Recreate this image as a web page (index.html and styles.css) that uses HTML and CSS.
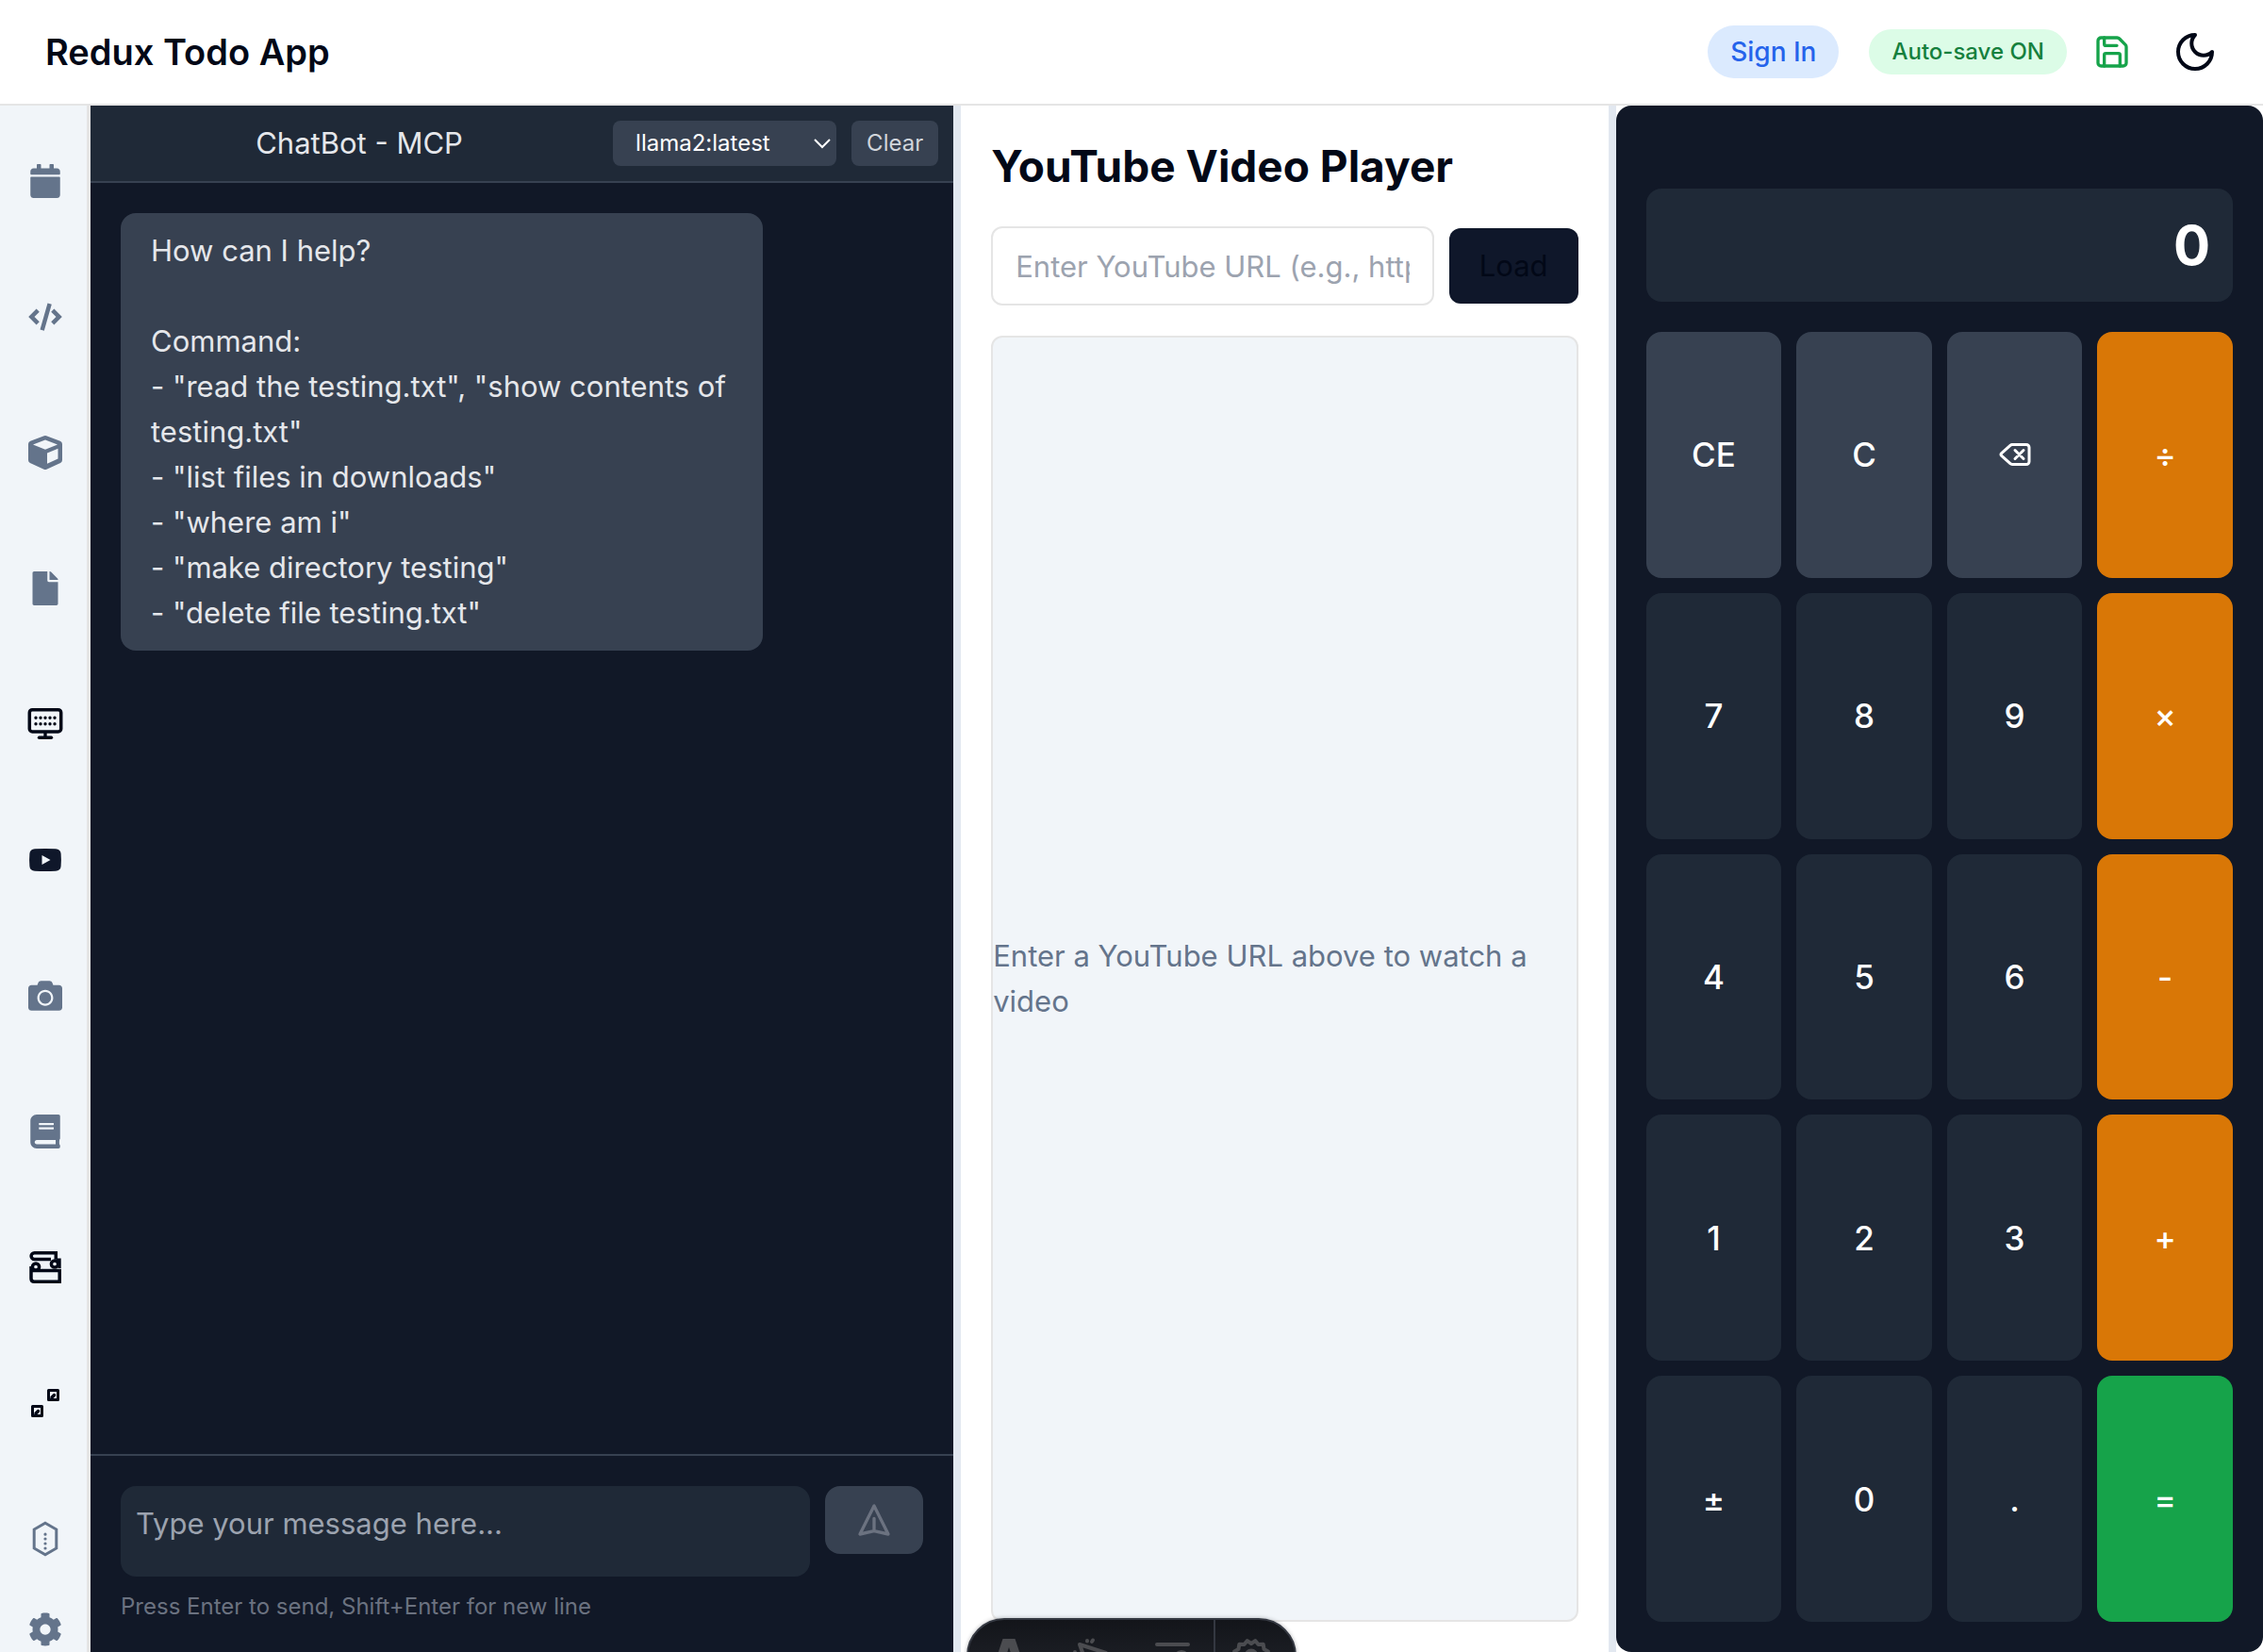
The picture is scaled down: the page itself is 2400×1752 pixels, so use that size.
FILE: index.html
```html
<!DOCTYPE html>
<html lang="en">
<head>
<meta charset="utf-8">
<title>Redux Todo App</title>
<link rel="stylesheet" href="styles.css">
</head>
<body>
<header class="topbar">
  <h1 class="brand">Redux Todo App</h1>
  <div class="topbar-actions">
    <button class="sign-in" type="button">Sign In</button>
    <div class="save-group">
      <button class="autosave" type="button">Auto-save ON</button>
      <button class="icon-btn save-btn" type="button" aria-label="Save">
        <svg width="40" height="40" viewBox="0 0 24 24" class="line"><path d="M15.2 3a2 2 0 0 1 1.4.6l3.8 3.8a2 2 0 0 1 .6 1.4V19a2 2 0 0 1-2 2H5a2 2 0 0 1-2-2V5a2 2 0 0 1 2-2z"/><path d="M17 21v-7a1 1 0 0 0-1-1H8a1 1 0 0 0-1 1v7M7 3v4a1 1 0 0 0 1 1h7"/></svg>
      </button>
    </div>
    <button class="icon-btn theme-btn" type="button" aria-label="Toggle theme">
      <svg width="48" height="48" viewBox="0 0 24 24" class="line"><path d="M12 3a6 6 0 0 0 9 9 9 9 0 1 1-9-9Z"/></svg>
    </button>
  </div>
</header>

<div class="workspace">
  <nav class="sidebar" aria-label="Tools">
    <div class="tools">
      <button class="tool" type="button" aria-label="Calendar"><svg width="32" height="36" viewBox="0 0 448 512"><path d="M12 192h424c6.600 0 12 5.400 12 12v260c0 26.500-21.500 48-48 48H48c-26.500 0-48-21.500-48-48V204c0-6.600 5.400-12 12-12zm436-44v-36c0-26.500-21.500-48-48-48h-48V12c0-6.600-5.400-12-12-12h-40c-6.600 0-12 5.400-12 12v52H160V12c0-6.600-5.400-12-12-12h-40c-6.600 0-12 5.400-12 12v52H48C21.500 64 0 85.500 0 112v36c0 6.600 5.400 12 12 12h424c6.600 0 12-5.400 12-12z"/></svg></button>
      <button class="tool" type="button" aria-label="Code"><svg width="40" height="40" viewBox="0 0 40 40"><path d="M22.500 5.500l4.300 1.200-8 28-4.300-1.200zM10.600 11.500l3.200 3.300-5.300 5.200 5.300 5.200-3.200 3.300L2.200 20zM29.400 11.500l-3.200 3.300 5.300 5.200-5.300 5.200 3.200 3.300L37.800 20z"/></svg></button>
      <button class="tool" type="button" aria-label="3D box"><svg width="40" height="40" viewBox="0 0 40 40"><path fill-rule="evenodd" d="M18.800 2.300q1.200-.5 2.400 0l14.600 5.500q2.200.9 2.200 3.200v17q0 2-1.900 3l-14.700 6.700q-1.400.6-2.800 0L3.900 31Q2 30 2 28V11q0-2.300 2.200-3.200zM20 6.500L7 11.600l13 5.200 13-5.200zM22 20.400v11.400l11.500-5.200V15.800z"/></svg></button>
      <button class="tool" type="button" aria-label="Files"><svg width="28" height="36" viewBox="0 0 384 512"><path d="M224 136V0H24C10.700 0 0 10.700 0 24v464c0 13.300 10.700 24 24 24h336c13.300 0 24-10.700 24-24V160H248c-13.200 0-24-10.800-24-24zm160-14.100v6.100H256V0h6.100c6.400 0 12.500 2.500 17 7l97.900 98c4.500 4.500 7 10.600 7 16.900z"/></svg></button>
      <button class="tool tool-dark" type="button" aria-label="ChatBot"><svg width="40" height="40" viewBox="0 0 40 40"><rect x="3.300" y="4.700" width="33.400" height="23.200" rx="3" fill="none" stroke="currentColor" stroke-width="3.500"/><path d="M18.300 28h3.400v5h-3.400z"/><path d="M13.500 34.300h13" stroke="currentColor" stroke-width="3.400" stroke-linecap="round"/><path d="M10 13.200h.01M15 13.200h.01M20 13.200h.01M25 13.200h.01M30 13.200h.01M10 19.800h.01M15 19.800h.01M20 19.800h.01M25 19.800h.01M30 19.800h.01" stroke="currentColor" stroke-width="3.400" stroke-linecap="round"/></svg></button>
      <button class="tool tool-active" type="button" aria-label="YouTube"><svg width="40" height="40" viewBox="0 0 40 40"><path fill-rule="evenodd" d="M9 8.300Q20 7.500 31 8.300q5.200.3 5.600 5 .6 6.700 0 13.400-.4 4.700-5.600 5-11 .8-22 0-5.200-.3-5.600-5-.6-6.700 0-13.400.4-4.700 5.600-5zM16.500 15v10l9-5z"/></svg></button>
      <button class="tool" type="button" aria-label="Camera"><svg width="36" height="36" viewBox="0 0 512 512"><path d="M512 144v288c0 26.500-21.500 48-48 48H48c-26.500 0-48-21.500-48-48V144c0-26.500 21.500-48 48-48h88l12.300-32.900c7-18.700 24.900-31.100 44.900-31.100h125.500c20 0 37.900 12.400 44.900 31.100L376 96h88c26.500 0 48 21.500 48 48zM376 288c0-66.200-53.800-120-120-120s-120 53.800-120 120 53.800 120 120 120 120-53.800 120-120zm-32 0c0 48.500-39.500 88-88 88s-88-39.500-88-88 39.500-88 88-88 88 39.500 88 88z"/></svg></button>
      <button class="tool" type="button" aria-label="Notebook"><svg width="32" height="36" viewBox="0 0 448 512"><path d="M448 360V24c0-13.300-10.700-24-24-24H96C43 0 0 43 0 96v320c0 53 43 96 96 96h328c13.300 0 24-10.700 24-24v-16c0-7.500-3.500-14.300-8.900-18.700-4.200-15.400-4.200-59.300 0-74.700 5.400-4.300 8.900-11.100 8.900-18.600zM128 134c0-3.300 2.700-6 6-6h212c3.300 0 6 2.700 6 6v20c0 3.300-2.700 6-6 6H134c-3.300 0-6-2.700-6-6v-20zm0 64c0-3.300 2.700-6 6-6h212c3.300 0 6 2.700 6 6v20c0 3.300-2.700 6-6 6H134c-3.300 0-6-2.700-6-6v-20zm253.400 250H96c-17.700 0-32-14.300-32-32 0-17.600 14.400-32 32-32h285.400c-1.900 17.100-1.900 46.900 0 64z"/></svg></button>
      <button class="tool tool-dark" type="button" aria-label="Wallet"><svg width="40" height="40" viewBox="0 0 40 40" fill="none" stroke="currentColor" stroke-width="3.500"><path d="M26 11.500H8.500a3.400 3.400 0 0 1 0-6.800h22.800v7"/><path d="M32 10.500h4.700v10.500h-3z" fill="currentColor" stroke="none"/><circle cx="30" cy="16.500" r="3.600"/><circle cx="10" cy="19.500" r="3.600"/><path d="M5 19v13q0 3.200 3.200 3.200h27v-11.600H8q-3 0-3-4"/></svg></button>
      <button class="tool tool-dark" type="button" aria-label="Transfer"><svg width="40" height="40" viewBox="0 0 40 40"><path fill-rule="evenodd" d="M23.500 5h10Q35 5 35 6.500v10q0 1.500-1.500 1.500h-10q-1.500 0-1.500-1.500v-10Q22 5 23.500 5zM25 8v7h7V8zM6.500 22h10q1.500 0 1.500 1.500v10q0 1.500-1.500 1.500h-10Q5 35 5 33.500v-10Q5 22 6.500 22zM8 25v7h7v-7z"/><path d="M27 14l2.500-2.500M10 31l2.500-2.500" stroke="currentColor" stroke-width="3.500" stroke-linecap="round"/></svg></button>
      <button class="tool" type="button" aria-label="Blocks"><svg width="40" height="40" viewBox="0 0 40 40"><path d="M20 3.200l11.800 6.800v20L20 36.800 8.200 30V10z" fill="none" stroke="currentColor" stroke-width="3"/><path d="M20 15.200h.01M20 20h.01M20 25h.01M20 30h.01" stroke="currentColor" stroke-width="3.200" stroke-linecap="round"/></svg></button>
    </div>
    <button class="tool" type="button" aria-label="Settings"><svg width="36" height="36" viewBox="0 0 512 512"><path d="M487.400 315.700l-42.600-24.600c4.300-23.200 4.300-47 0-70.200l42.600-24.600c4.900-2.800 7.100-8.600 5.500-14-11.100-35.600-30-67.800-54.700-94.600-3.800-4.100-10-5.100-14.800-2.300L380.800 110c-17.900-15.400-38.500-27.300-60.800-35.100V25.800c0-5.600-3.900-10.500-9.400-11.700-36.700-8.200-74.300-7.800-109.200 0-5.500 1.200-9.400 6.100-9.400 11.700V75c-22.200 7.900-42.800 19.800-60.800 35.100L88.700 85.500c-4.900-2.800-11-1.900-14.800 2.300-24.700 26.700-43.600 58.900-54.700 94.600-1.700 5.400.6 11.200 5.500 14L67.300 221c-4.300 23.200-4.300 47 0 70.200l-42.600 24.600c-4.900 2.800-7.100 8.600-5.500 14 11.100 35.600 30 67.800 54.700 94.600 3.800 4.100 10 5.100 14.800 2.300l42.600-24.600c17.900 15.400 38.500 27.300 60.800 35.100v49.200c0 5.600 3.900 10.500 9.400 11.700 36.700 8.200 74.300 7.800 109.200 0 5.500-1.200 9.400-6.100 9.400-11.700v-49.200c22.200-7.900 42.800-19.800 60.800-35.100l42.600 24.600c4.900 2.800 11 1.900 14.800-2.300 24.700-26.700 43.600-58.900 54.700-94.600 1.500-5.500-.7-11.300-5.600-14.100zM256 336c-44.100 0-80-35.900-80-80s35.900-80 80-80 80 35.900 80 80-35.900 80-80 80z"/></svg></button>
  </nav>

  <main class="panels">
    <section class="chat">
      <div class="chat-head">
        <h2 class="chat-title">ChatBot - MCP</h2>
        <div class="select-wrap">
          <select class="model" aria-label="Model"><option>llama2:latest</option></select>
          <svg class="chevron" width="20" height="12" viewBox="0 0 20 12"><path d="M2 2l8 8 8-8" fill="none" stroke="currentColor" stroke-width="2"/></svg>
        </div>
        <button class="clear" type="button">Clear</button>
      </div>
      <div class="messages">
        <p class="bubble">How can I help?

Command:
- "read the testing.txt", "show contents of testing.txt"
- "list files in downloads"
- "where am i"
- "make directory testing"
- "delete file testing.txt"</p>
      </div>
      <form class="composer">
        <div class="composer-row">
          <textarea class="message" aria-label="Message" placeholder="Type your message here..."></textarea>
          <button class="send" type="button" aria-label="Send message">
            <svg width="40" height="40" viewBox="0 0 24 24" class="line"><path d="M12 19l9 2-9-18-9 18 9-2zm0 0v-8"/></svg>
          </button>
        </div>
        <p class="hint">Press Enter to send, Shift+Enter for new line</p>
      </form>
    </section>

    <div class="handle"></div>

    <section class="player">
      <h2 class="player-title">YouTube Video Player</h2>
      <form class="player-form">
        <input class="url" type="text" aria-label="YouTube URL" placeholder="Enter YouTube URL (e.g., https://www.youtube.com/watch?v=...)">
        <button class="load" type="button">Load</button>
      </form>
      <div class="video"><p>Enter a YouTube URL above to watch a video</p></div>
    </section>

    <div class="handle"></div>

    <section class="calculator" aria-label="Calculator">
      <output class="display">0</output>
      <div class="keys">
        <button class="key key-fn" type="button">CE</button>
        <button class="key key-fn" type="button">C</button>
        <button class="key key-fn" type="button" aria-label="Backspace"><svg width="36" height="36" viewBox="0 0 24 24" class="line"><path d="M10 5a2 2 0 0 0-1.344.519l-6.328 5.740a1 1 0 0 0 0 1.481l6.328 5.741A2 2 0 0 0 10 19h10a2 2 0 0 0 2-2V7a2 2 0 0 0-2-2zM12 9l6 6M18 9l-6 6"/></svg></button>
        <button class="key key-op" type="button">÷</button>
        <button class="key" type="button">7</button>
        <button class="key" type="button">8</button>
        <button class="key" type="button">9</button>
        <button class="key key-op" type="button">×</button>
        <button class="key" type="button">4</button>
        <button class="key" type="button">5</button>
        <button class="key" type="button">6</button>
        <button class="key key-op" type="button">-</button>
        <button class="key" type="button">1</button>
        <button class="key" type="button">2</button>
        <button class="key" type="button">3</button>
        <button class="key key-op" type="button">+</button>
        <button class="key" type="button">±</button>
        <button class="key" type="button">0</button>
        <button class="key" type="button">.</button>
        <button class="key key-eq" type="button">=</button>
      </div>
    </section>
  </main>
</div>

<div class="dev-toolbar" role="toolbar" aria-label="Developer tools">
  <div class="dev-main">
    <button class="dev-btn" type="button" aria-label="Menu"><svg width="44" height="44" viewBox="0 0 44 44"><path fill-rule="evenodd" d="M15.500 4h13l12 36H31l-3-7H16l-3 7H3.500zM22 13l-4 12h8z"/></svg></button>
    <button class="dev-btn" type="button" aria-label="Inspect"><svg width="44" height="44" viewBox="0 0 44 44" fill="none" stroke="currentColor" stroke-width="4" stroke-linejoin="round" stroke-linecap="round"><path d="M10 10l28 9-12 6-6 13zM18 6v.500M24 5.500l-1 1.500M5 18v.500"/></svg></button>
    <button class="dev-btn" type="button" aria-label="Audit"><svg width="44" height="44" viewBox="0 0 44 44" fill="none" stroke="currentColor" stroke-width="4" stroke-linecap="round"><path d="M5 10h33M5 21h14M5 32h12"/><circle cx="31" cy="25" r="7"/></svg></button>
  </div>
  <button class="dev-btn dev-settings" type="button" aria-label="Toolbar settings"><svg width="44" height="44" viewBox="0 0 24 24" fill="none" stroke="currentColor" stroke-width="2.200" stroke-linejoin="round"><path d="M12 5l2.300-1.700 1.800 2.200 2.800-.2.500 2.900 2.400 1.300-1 2.500 1 2.500-2.400 1.300-.5 2.900-2.800-.2-1.800 2.200L12 19l-2.300 1.700-1.800-2.200-2.800.2-.5-2.900-2.400-1.300 1-2.500-1-2.500 2.400-1.300.5-2.900 2.800.2 1.800-2.200z"/><circle cx="12" cy="12" r="3"/></svg></button>
</div>
</body>
</html>
```
FILE: styles.css
```css
* { box-sizing: border-box; }
body {
  margin: 0;
  height: 100vh;
  display: flex;
  flex-direction: column;
  overflow: hidden;
  background: #fff;
  color: #020817;
  font-family: Inter, "Liberation Sans", sans-serif;
  font-size: 31px;
  line-height: 48px;
}
h1, h2, p { margin: 0; }
button, input, select, textarea { font: inherit; color: inherit; margin: 0; }
button { border: 0; padding: 0; background: none; cursor: pointer; }
svg { display: block; fill: currentColor; }
.line { fill: none; stroke: currentColor; stroke-width: 2; stroke-linecap: round; stroke-linejoin: round; }
svg[fill="none"] { fill: none; }

.topbar {
  flex: none;
  height: 112px;
  padding: 0 48px;
  display: flex;
  align-items: center;
  justify-content: space-between;
  border-bottom: 2px solid #e5e5e5;
}
.brand { font-size: 38px; font-weight: 600; }
.topbar-actions { display: flex; align-items: center; gap: 32px; }
.sign-in { height: 56px; padding: 0 24px; border-radius: 28px; background: #dbeafe; color: #2563eb; font-size: 28px; font-weight: 500; }
.save-group { display: flex; align-items: center; gap: 16px; }
.autosave { height: 48px; padding: 0 24px; border-radius: 24px; background: #dcfce7; color: #15803d; font-size: 24px; font-weight: 500; }
.icon-btn { display: grid; place-items: center; }
.save-btn { width: 64px; height: 64px; color: #16a34a; }
.theme-btn { width: 48px; height: 48px; }

.workspace { flex: 1; min-height: 0; display: flex; }
.sidebar {
  flex: none;
  width: 96px;
  padding-top: 56px;
  display: flex;
  flex-direction: column;
  align-items: center;
  gap: 48px;
  background: #f1f5f9;
  border-right: 4px solid #e5e5e5;
  padding-left: 4px;
  color: #64748b;
}
.tools { display: flex; flex-direction: column; gap: 96px; }
.tool { flex: none; width: 48px; height: 48px; display: grid; place-items: center; }
.tool-dark { color: #020817; }
.tool-active { color: #0f172a; }

.panels {
  flex: 1;
  min-width: 0;
  display: grid;
  grid-template-columns: minmax(0, 4fr) 8px minmax(0, 3fr) 8px minmax(0, 3fr);
  grid-template-rows: minmax(0, 1fr);
}
.handle { background: #e2e8f0; }

.chat { display: flex; flex-direction: column; background: #111827; color: #e5e7eb; }
.chat-head {
  flex: none;
  display: flex;
  align-items: center;
  gap: 16px;
  padding: 16px;
  background: #1f2937;
  border-bottom: 2px solid #374151;
}
.chat-title { flex: 1; margin-right: -16px; text-align: center; font-size: 31px; font-weight: 400; }
.select-wrap { position: relative; width: 237px; }
.model { display: block; appearance: none; width: 100%; height: 48px; padding: 0 24px; border: 0; border-radius: 8px; background: #374151; color: #fff; font-size: 24px; }
.chevron { position: absolute; right: 5px; top: 18px; color: #fff; pointer-events: none; }
.clear { height: 48px; padding: 0 16px; border-radius: 8px; background: #374151; color: #d1d5db; font-size: 24px; }
.messages { flex: 1; min-height: 0; padding: 32px; }
.bubble { width: 80%; padding: 16px 32px; border-radius: 16px; background: #374151; white-space: pre-wrap; }
.composer { flex: none; padding: 32px; border-top: 2px solid #374151; }
.composer-row { display: flex; align-items: flex-start; gap: 16px; }
.message { flex: 1; min-width: 0; height: 96px; padding: 16px; border: 0; border-radius: 16px; resize: none; background: #1f2937; }
.message::placeholder, .url::placeholder { color: #9ca3af; opacity: 1; }
.send { width: 104px; height: 72px; display: grid; place-items: center; border-radius: 16px; background: #374151; color: #6b7280; }
.hint { margin-top: 16px; font-size: 24px; line-height: 32px; color: #6b7280; }

.player { padding: 32px; display: flex; flex-direction: column; }
.player-title { margin-bottom: 32px; font-size: 46px; line-height: 64px; font-weight: 700; }
.player-form { display: flex; align-items: center; gap: 16px; margin-bottom: 32px; }
.url { flex: 1; min-width: 0; height: 84px; padding: 0 24px; border: 2px solid #e5e5e5; border-radius: 12px; background: #fff; }
.load { height: 80px; padding: 0 32px; border-radius: 12px; background: #0f172a; color: #020817; }
.video { flex: 1; display: flex; align-items: center; border: 2px solid #e5e5e5; border-radius: 12px; background: #f1f5f9; color: #64748b; }

.calculator { padding: 88px 32px 32px; display: flex; flex-direction: column; gap: 32px; border-radius: 16px; background: #111827; color: #fff; }
.display { flex: none; height: 120px; padding: 0 24px; border-radius: 16px; background: #1f2937; font-size: 58px; font-weight: 700; line-height: 120px; text-align: right; }
.keys { flex: 1; display: grid; grid-template-columns: repeat(4, 1fr); grid-template-rows: repeat(5, 1fr); gap: 16px; }
.key { display: grid; place-items: center; border-radius: 16px; background: #1f2937; font-size: 35px; font-weight: 500; }
.key-fn { background: #374151; }
.key-op { background: #d97706; }
.key-eq { background: #16a34a; }

.dev-toolbar {
  position: fixed;
  left: 0;
  right: 0;
  bottom: -44px;
  width: 350px;
  height: 80px;
  margin: 0 auto;
  display: flex;
  border: 2px solid #343841;
  border-radius: 40px;
  background: linear-gradient(#13151a, #23262d);
  box-shadow: 0 0 4px rgba(19, 21, 26, 0.3);
  color: #4b4c50;
}
.dev-main { flex: 1; display: flex; justify-content: space-around; }
.dev-btn { flex: 1; display: flex; justify-content: center; padding-top: 16px; }
.dev-settings { flex: none; width: 86px; padding-right: 8px; border-left: 2px solid #343841; }
```
